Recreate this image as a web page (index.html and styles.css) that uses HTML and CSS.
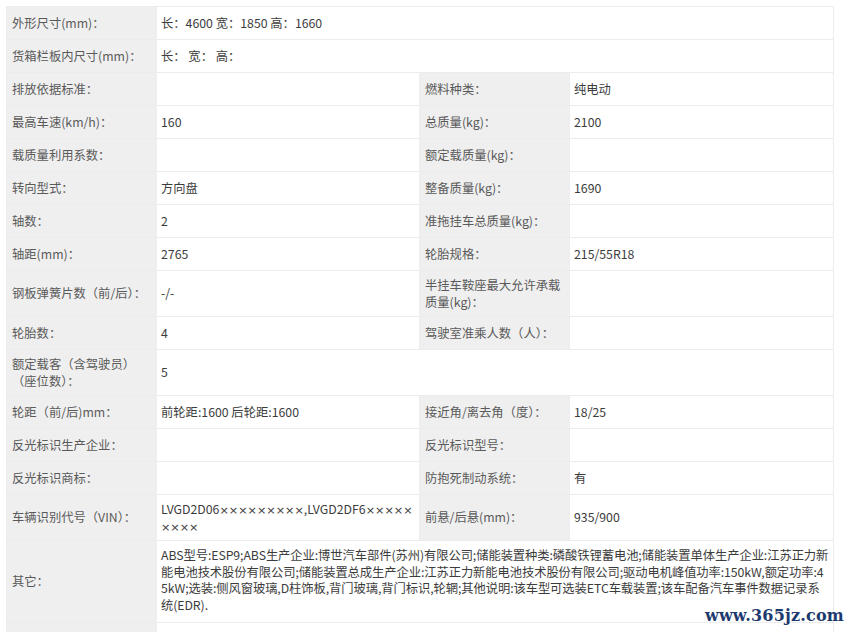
FILE: index.html
```html
<!DOCTYPE html>
<html lang="zh-CN">
<head>
<meta charset="utf-8">
<title>车辆参数</title>
<link rel="stylesheet" href="styles.css">
</head>
<body>
<div class="page">
<table class="spec">
  <colgroup>
    <col class="c-label"><col class="c-value"><col class="c-label2"><col class="c-value2">
  </colgroup>
  <tbody>
    <tr><td class="lbl">外形尺寸(mm)：</td><td class="val" colspan="3">长：4600 宽：1850 高：1660</td></tr>
    <tr><td class="lbl">货箱栏板内尺寸(mm)：</td><td class="val" colspan="3">长： 宽： 高：</td></tr>
    <tr><td class="lbl">排放依据标准：</td><td class="val"></td><td class="lbl">燃料种类：</td><td class="val">纯电动</td></tr>
    <tr><td class="lbl">最高车速(km/h)：</td><td class="val">160</td><td class="lbl">总质量(kg)：</td><td class="val">2100</td></tr>
    <tr><td class="lbl">载质量利用系数：</td><td class="val"></td><td class="lbl">额定载质量(kg)：</td><td class="val"></td></tr>
    <tr><td class="lbl">转向型式：</td><td class="val">方向盘</td><td class="lbl">整备质量(kg)：</td><td class="val">1690</td></tr>
    <tr><td class="lbl">轴数：</td><td class="val">2</td><td class="lbl">准拖挂车总质量(kg)：</td><td class="val"></td></tr>
    <tr><td class="lbl">轴距(mm)：</td><td class="val">2765</td><td class="lbl">轮胎规格：</td><td class="val">215/55R18</td></tr>
    <tr><td class="lbl">钢板弹簧片数（前/后）：</td><td class="val">-/-</td><td class="lbl">半挂车鞍座最大允许承载质量(kg)：</td><td class="val"></td></tr>
    <tr><td class="lbl">轮胎数：</td><td class="val">4</td><td class="lbl">驾驶室准乘人数（人）：</td><td class="val"></td></tr>
    <tr><td class="lbl">额定载客（含驾驶员）（座位数）：</td><td class="val" colspan="3">5</td></tr>
    <tr><td class="lbl">轮距（前/后)mm：</td><td class="val">前轮距:1600 后轮距:1600</td><td class="lbl">接近角/离去角（度）：</td><td class="val">18/25</td></tr>
    <tr><td class="lbl">反光标识生产企业：</td><td class="val"></td><td class="lbl">反光标识型号：</td><td class="val"></td></tr>
    <tr><td class="lbl">反光标识商标：</td><td class="val"></td><td class="lbl">防抱死制动系统：</td><td class="val">有</td></tr>
    <tr><td class="lbl">车辆识别代号（VIN）：</td><td class="val">LVGD2D06<span class="mask">×××××××××</span>,LVGD2DF6<span class="mask">×××××××××</span></td><td class="lbl">前悬/后悬(mm)：</td><td class="val">935/900</td></tr>
    <tr><td class="lbl">其它：</td><td class="val other" colspan="3">ABS型号:ESP9;ABS生产企业:博世汽车部件(苏州)有限公司;储能装置种类:磷酸铁锂蓄电池;储能装置单体生产企业:江苏正力新能电池技术股份有限公司;储能装置总成生产企业:江苏正力新能电池技术股份有限公司;驱动电机峰值功率:150kW,额定功率:45kW;选装:侧风窗玻璃,D柱饰板,背门玻璃,背门标识,轮辋;其他说明:该车型可选装ETC车载装置;该车配备汽车事件数据记录系统(EDR).</td></tr>
    <tr><td class="lbl"></td><td class="val" colspan="3"></td></tr>
  </tbody>
</table>
<div class="watermark">www.365jz.com</div>
</div>
</body>
</html>
```
FILE: styles.css
```css
html, body {
  margin: 0;
  padding: 0;
  background: #ffffff;
}
body {
  font-family: "Noto Sans CJK SC", "Noto Sans", sans-serif;
  font-size: 12.3px;
  color: #444;
  overflow: hidden;
}
.page {
  position: relative;
  padding: 6px 0 0 6px;
  width: 850px;
  height: 632px;
  box-sizing: border-box;
}
.spec {
  border-collapse: collapse;
  table-layout: fixed;
  width: 827px;
}
.c-label { width: 150px; }
.c-value { width: 263px; }
.c-label2 { width: 150px; }
.c-value2 { width: 264px; }
.spec td {
  border: 1px solid #ececec;
  padding: 6px 4px 6px 5px;
  height: 20px;
  line-height: 16.5px;
  vertical-align: middle;
  word-break: break-all;
}
.spec td.lbl {
  background: #efefef;
  color: #5a5a5a;
}
.spec td.val {
  color: #3c3c3c;
  padding-left: 4px;
  padding-right: 1px;
}
.spec td.other {
  padding-top: 6px;
  padding-bottom: 9px;
  padding-right: 3px;
  letter-spacing: -0.08px;
}
.mask {
  font-family: "DejaVu Sans", sans-serif;
  font-size: 11.2px;
  line-height: 1;
}
.watermark {
  position: absolute;
  right: 6px;
  top: 606px;
  font-family: "DejaVu Serif", "Liberation Serif", serif;
  font-size: 16px;
  font-weight: bold;
  color: #1d3a6e;
  letter-spacing: 0.2px;
}
```
